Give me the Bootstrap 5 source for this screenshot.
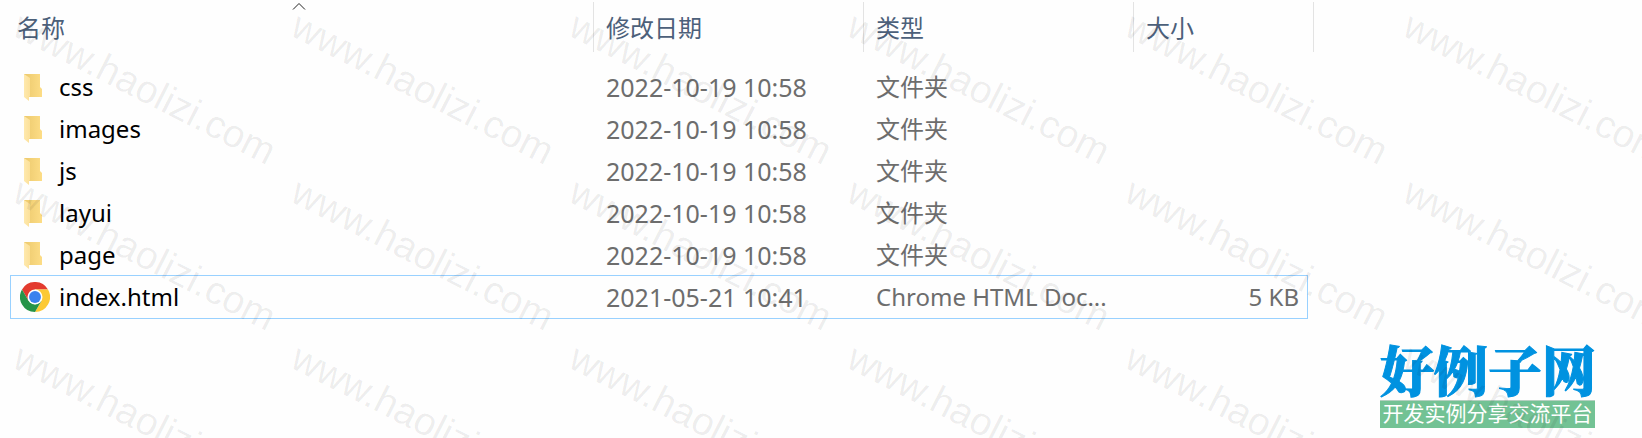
<!DOCTYPE html>
<html lang="zh-CN">
<head>
<meta charset="utf-8">
<meta name="viewport" content="width=device-width, initial-scale=1">
<title>文件列表</title>
<link href="https://cdn.jsdelivr.net/npm/bootstrap@5.3.0/dist/css/bootstrap.min.css" rel="stylesheet">
<style>
  body { background: #fefefe; font-family: "Noto Sans", "Noto Sans CJK SC", sans-serif; }
  .file-pane { padding: 0 7px 0 11px; }
  .file-table { table-layout: fixed; font-size: 24px; line-height: 42px; color: #6d6d6d; }
  .file-table th { padding: 2px 0 14px; font-weight: 400; color: #4c607a; }
  .file-table th:first-child .head-cell { margin-left: -6px; }
  .file-table th:last-child .head-cell { margin-right: -7px; }
  .file-table td { height: 42px; padding: 0 0 0 12px; white-space: nowrap; overflow: hidden; text-overflow: ellipsis; }
  .file-table td:first-child { padding-left: 9px; color: #000; }
  .file-table td:last-child { padding-right: 8px; text-align: right; }
  .file-table .file-date { font-size: 25px; line-height: 40px; }
  .col-medium { width: 270px; }
  .col-size { width: 173px; }
  .head-cell { height: 50px; line-height: 52px; padding-left: 12px; border-right: 1px solid #e3e3e3; }
  .file-name { gap: 9px; }
  .file-name svg { width: 30px; height: 30px; flex: none; }
  .focused-row { outline: 1px solid #99d1ff; }
  .brand-side { width: 328px; padding: 0 47px 10px 66px; }
  .brand-name { font: 900 54px/54px "Noto Serif CJK SC", "Noto Sans CJK SC", serif; color: #0092e0; -webkit-text-stroke: 1px #0092e0; }
  .brand-slogan { margin-top: 4px; padding-bottom: 5px; font: 400 21px/22px "Noto Sans CJK SC", sans-serif; color: #fff; background: #73c294; border-top: 1px solid #b5cfc0; }
  .watermarks { display: grid; grid-template-columns: repeat(6, 278px); grid-auto-rows: 166px; padding: 6px 0 0 25px; font: 39px/38px "Liberation Sans", Arial, sans-serif; color: rgba(0, 0, 0, .07); }
  .watermarks span { justify-self: start; align-self: start; transform: rotate(27deg); transform-origin: 0 0; }
</style>
</head>
<body>
<svg class="position-absolute" width="0" height="0" aria-hidden="true">
  <defs>
    <linearGradient id="folderBack" x1="0" x2="1"><stop offset="0" stop-color="#ecc96d"/><stop offset="1" stop-color="#fddd86"/></linearGradient>
    <linearGradient id="folderFlap" x1="0" x2="1"><stop offset="0" stop-color="#ffe9ad"/><stop offset="1" stop-color="#fbe09a"/></linearGradient>
  </defs>
  <symbol id="folder" viewBox="0 0 30 30">
    <path fill="url(#folderBack)" d="M4 2H20V15L22 17V25H9L4 21Z"/>
    <path fill="url(#folderFlap)" d="M4 2L10 6V24L9 25V29L4 25Z"/>
  </symbol>
</svg>
<div class="position-relative overflow-hidden min-vh-100 d-flex">
  <main class="file-pane flex-grow-1">
    <table class="file-table w-100">
      <colgroup><col><col class="col-medium"><col class="col-medium"><col class="col-size"></colgroup>
      <thead>
        <tr>
          <th scope="col" aria-sort="ascending"><div class="head-cell position-relative">名称
            <svg class="position-absolute top-0 start-50 translate-middle-x" width="14" height="9" viewBox="0 0 14 9" fill="none" stroke="#222" aria-hidden="true"><path d="M1 7.500L7 1.500L13 7.500"/></svg></div></th>
          <th scope="col"><div class="head-cell">修改日期</div></th>
          <th scope="col"><div class="head-cell">类型</div></th>
          <th scope="col"><div class="head-cell">大小</div></th>
        </tr>
      </thead>
      <tbody>
        <tr><td><div class="file-name d-flex align-items-center"><svg aria-hidden="true"><use href="#folder"/></svg>css</div></td><td class="file-date">2022-10-19 10:58</td><td>文件夹</td><td></td></tr>
        <tr><td><div class="file-name d-flex align-items-center"><svg aria-hidden="true"><use href="#folder"/></svg>images</div></td><td class="file-date">2022-10-19 10:58</td><td>文件夹</td><td></td></tr>
        <tr><td><div class="file-name d-flex align-items-center"><svg aria-hidden="true"><use href="#folder"/></svg>js</div></td><td class="file-date">2022-10-19 10:58</td><td>文件夹</td><td></td></tr>
        <tr><td><div class="file-name d-flex align-items-center"><svg aria-hidden="true"><use href="#folder"/></svg>layui</div></td><td class="file-date">2022-10-19 10:58</td><td>文件夹</td><td></td></tr>
        <tr><td><div class="file-name d-flex align-items-center"><svg aria-hidden="true"><use href="#folder"/></svg>page</div></td><td class="file-date">2022-10-19 10:58</td><td>文件夹</td><td></td></tr>
        <tr class="focused-row">
          <td><div class="file-name d-flex align-items-center">
            <svg viewBox="0 0 48 48" aria-hidden="true">
              <path fill="#e33b2e" d="M3.200 12A24 24 0 0 1 44.800 12H24L13.600 30Z"/>
              <path fill="#fcc934" d="M44.800 12A24 24 0 0 1 24 48L34.400 30L24 12Z"/>
              <path fill="#269449" d="M24 48A24 24 0 0 1 3.200 12L13.600 30L24 36L34.400 30Z"/>
              <circle cx="24" cy="24" r="12" fill="#fff"/><circle cx="24" cy="24" r="9.500" fill="#3b82ee"/>
            </svg>index.html</div></td>
          <td class="file-date">2021-05-21 10:41</td><td>Chrome HTML Doc...</td><td>5 KB</td>
        </tr>
      </tbody>
    </table>
  </main>
  <aside class="brand-side flex-shrink-0 d-flex flex-column justify-content-end text-center text-nowrap">
    <div class="brand-name">好例子网</div>
    <div class="brand-slogan">开发实例分享交流平台</div>
  </aside>
  <div class="watermarks position-absolute top-0 start-0 pe-none" aria-hidden="true">
    <span>www.haolizi.com</span><span>www.haolizi.com</span><span>www.haolizi.com</span><span>www.haolizi.com</span><span>www.haolizi.com</span><span>www.haolizi.com</span>
    <span>www.haolizi.com</span><span>www.haolizi.com</span><span>www.haolizi.com</span><span>www.haolizi.com</span><span>www.haolizi.com</span><span>www.haolizi.com</span>
    <span>www.haolizi.com</span><span>www.haolizi.com</span><span>www.haolizi.com</span><span>www.haolizi.com</span><span>www.haolizi.com</span><span>www.haolizi.com</span>
  </div>
</div>
<script src="https://cdn.jsdelivr.net/npm/bootstrap@5.3.0/dist/js/bootstrap.bundle.min.js"></script>
</body>
</html>
